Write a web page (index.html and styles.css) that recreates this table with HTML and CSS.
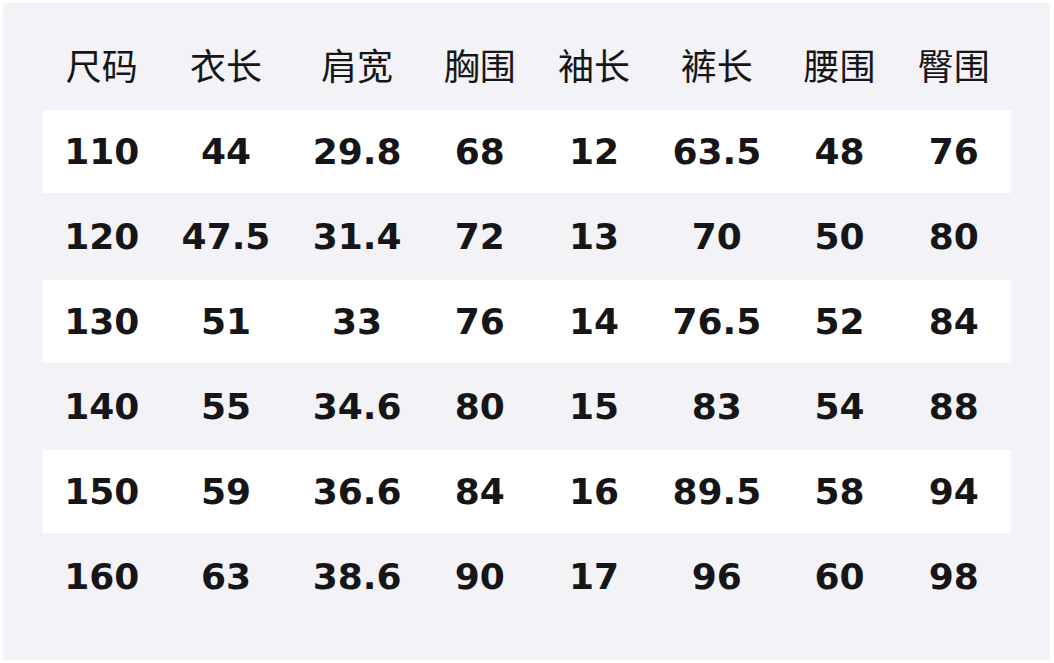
FILE: index.html
```html
<!DOCTYPE html>
<html lang="zh">
<head>
<meta charset="utf-8">
<title>尺码表</title>
<link rel="stylesheet" href="styles.css">
</head>
<body>
<div class="panel">
  <table class="size-table">
    <thead>
      <tr><th>尺码</th><th>衣长</th><th>肩宽</th><th>胸围</th><th>袖长</th><th>裤长</th><th>腰围</th><th>臀围</th></tr>
    </thead>
    <tbody>
      <tr class="alt"><td>110</td><td>44</td><td>29.8</td><td>68</td><td>12</td><td>63.5</td><td>48</td><td>76</td></tr>
      <tr><td>120</td><td>47.5</td><td>31.4</td><td>72</td><td>13</td><td>70</td><td>50</td><td>80</td></tr>
      <tr class="alt"><td>130</td><td>51</td><td>33</td><td>76</td><td>14</td><td>76.5</td><td>52</td><td>84</td></tr>
      <tr><td>140</td><td>55</td><td>34.6</td><td>80</td><td>15</td><td>83</td><td>54</td><td>88</td></tr>
      <tr class="alt"><td>150</td><td>59</td><td>36.6</td><td>84</td><td>16</td><td>89.5</td><td>58</td><td>94</td></tr>
      <tr><td>160</td><td>63</td><td>38.6</td><td>90</td><td>17</td><td>96</td><td>60</td><td>98</td></tr>
    </tbody>
  </table>
</div>
</body>
</html>
```

FILE: styles.css
```css
html, body {
  margin: 0;
  padding: 0;
  background: #ffffff;
}
body {
  width: 1054px;
  height: 663px;
  padding: 3px;
  box-sizing: border-box;
}
.panel {
  box-sizing: border-box;
  width: 1047px;
  height: 657px;
  background: #f2f2f7;
  padding: 20px 0 0 40px;
}
.size-table {
  border-collapse: separate;
  border-spacing: 0 2px;
  font-family: "DejaVu Sans", "Noto Sans CJK SC", sans-serif;
  font-size: 36px;
  color: #161618;
}
.size-table th,
.size-table td {
  height: 83px;
  padding: 0 21.15px;
  text-align: center;
  vertical-align: middle;
  white-space: nowrap;
}
.size-table th {
  font-family: "Noto Sans CJK SC", sans-serif;
  font-weight: 400;
  padding-bottom: 6px;
  height: 77px;
}
.size-table td {
  font-weight: 700;
}
.size-table tr.alt td {
  background: #ffffff;
}
```
